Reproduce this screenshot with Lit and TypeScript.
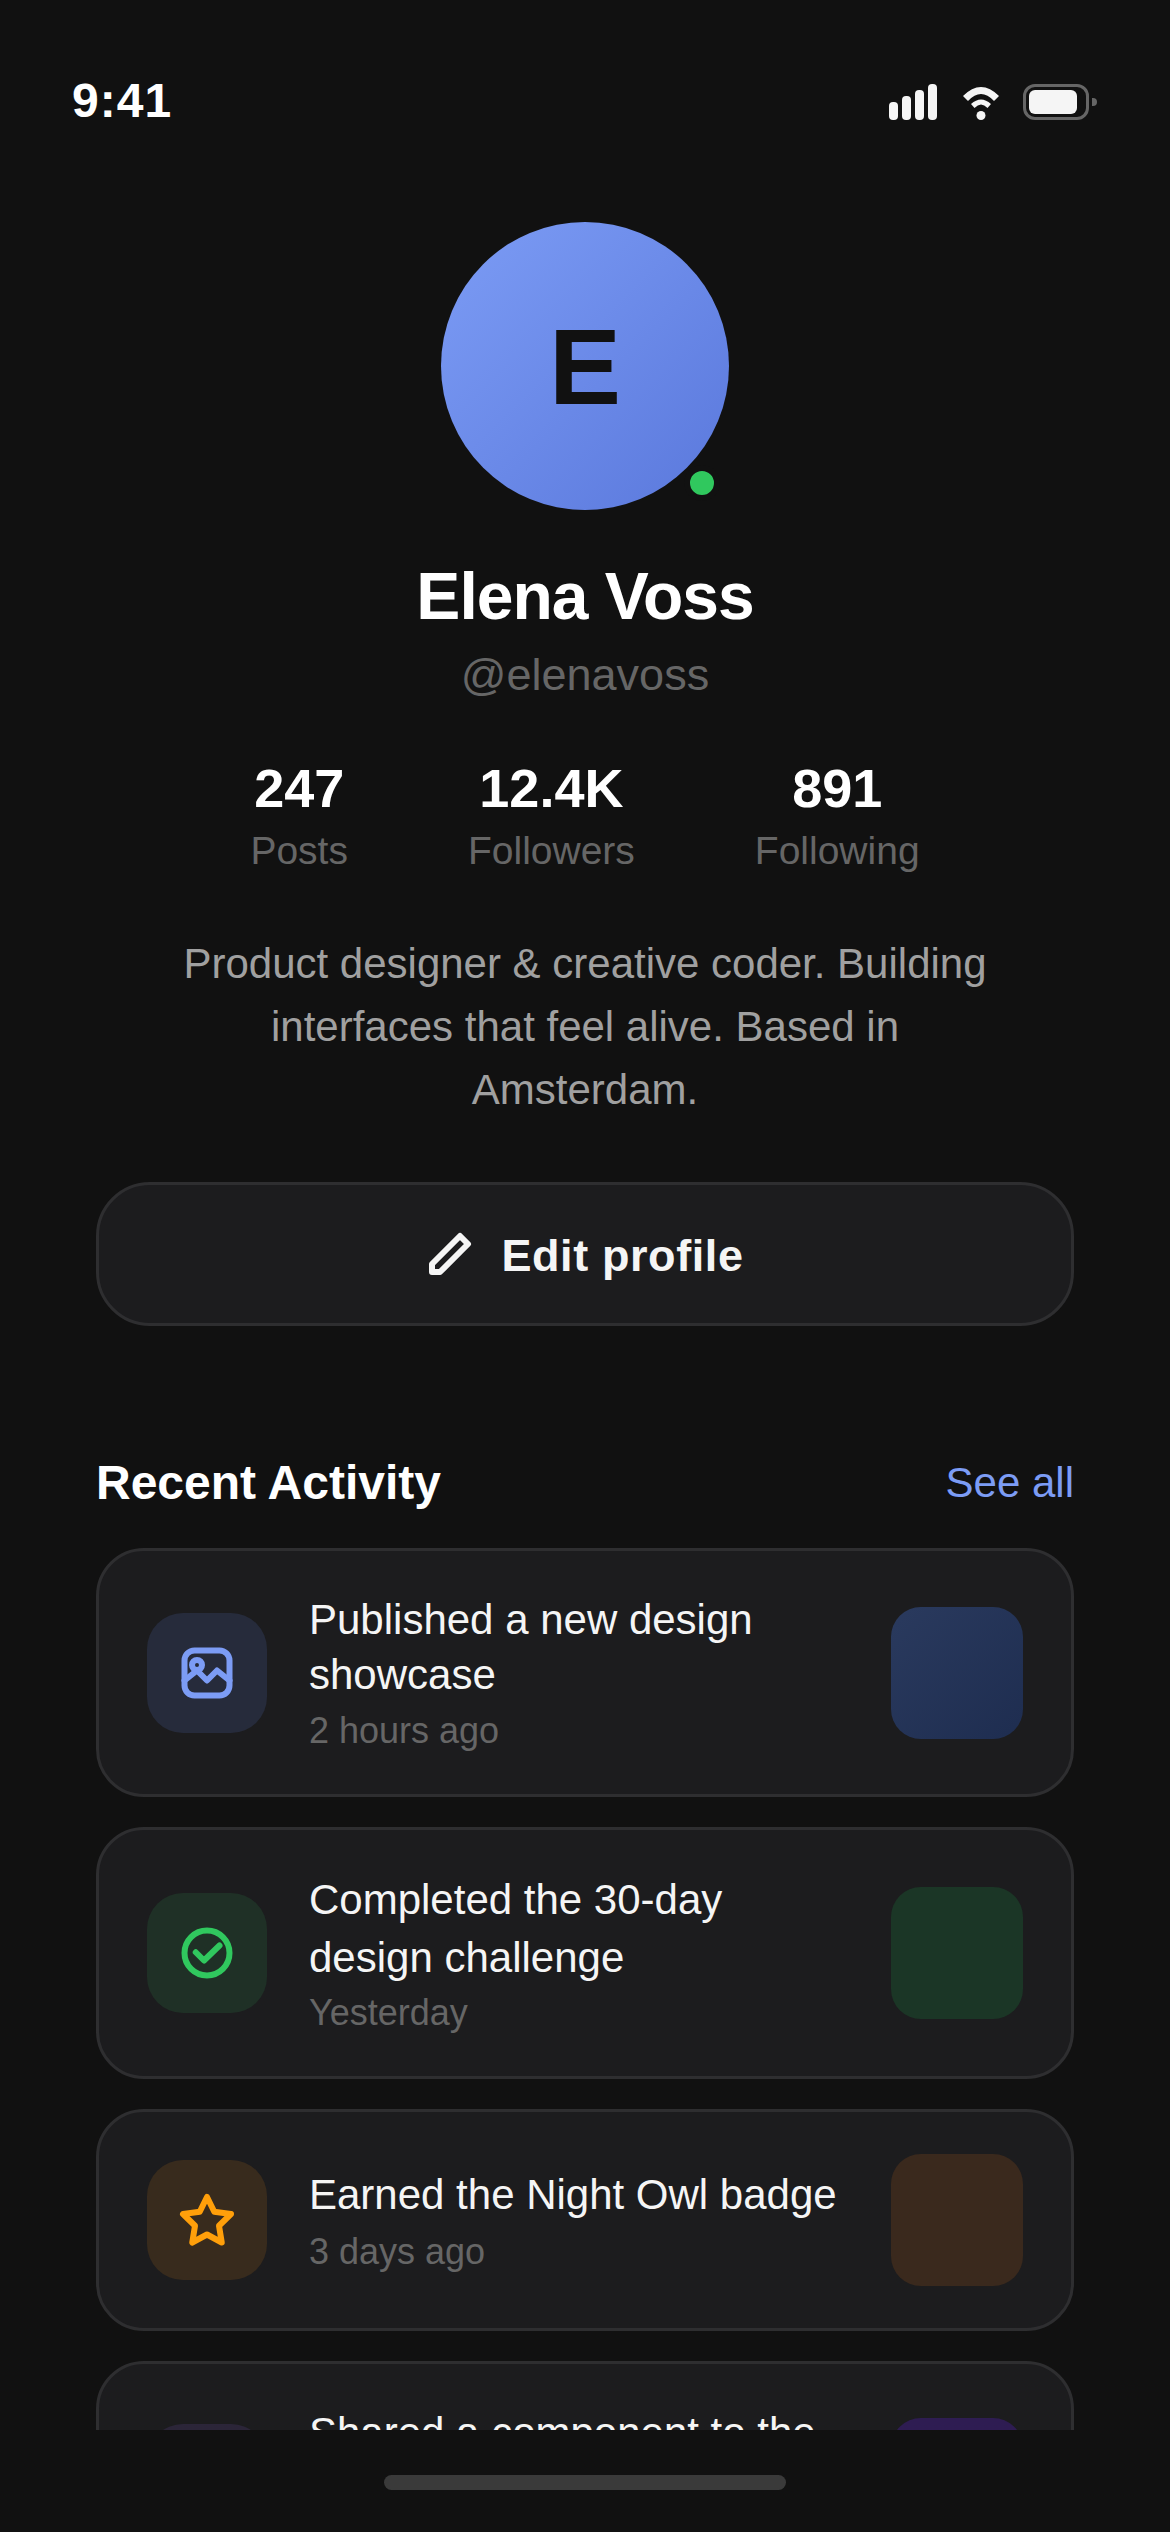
import { LitElement, html, css, svg } from "lit";
import { customElement } from "lit/decorators.js";

interface Activity {
  title: string;
  time: string;
  kind: string;
  icon: unknown;
}

const imageIcon = svg`<rect x="3" y="3" width="18" height="18" rx="4"/><circle cx="8" cy="8.800" r="2"/><polyline points="3 15 8 11 12 15 16 11 21 15"/>`;
const checkIcon = svg`<circle cx="12" cy="12" r="9"/><polyline points="7.500 11.700 10.800 15 17 9"/>`;
const starIcon = svg`<polygon points="12 2.800 14.900 8.700 21.600 9.600 16.800 14.300 17.900 21 12 17.800 6.100 21 7.200 14.300 2.400 9.600 9.100 8.700"/>`;
const shareIcon = svg`<circle cx="12" cy="12" r="9"/>`;

const ACTIVITIES: Activity[] = [
  { title: "Published a new design showcase", time: "2 hours ago", kind: "blue", icon: imageIcon },
  { title: "Completed the 30-day design challenge", time: "Yesterday", kind: "green", icon: checkIcon },
  { title: "Earned the Night Owl badge", time: "3 days ago", kind: "orange", icon: starIcon },
  { title: "Shared a component to the library", time: "5 days ago", kind: "purple", icon: shareIcon },
];

@customElement("app-root")
export class AppRoot extends LitElement {
  static styles = css`
    :host {
      display: block;
      width: 1170px;
      height: 2532px;
      background: #111111;
      color: #f5f5f5;
      font-family: "Liberation Sans", Arial, sans-serif;
    }
    .screen {
      display: flex;
      flex-direction: column;
      height: 2532px;
      overflow: hidden;
    }
    .status {
      flex: none;
      display: flex;
      justify-content: space-between;
      align-items: center;
      height: 36px;
      padding: 84px 72px 0;
    }
    .time {
      font-size: 48px;
      font-weight: 700;
      letter-spacing: 1px;
      line-height: 36px;
      margin-bottom: 2px;
      color: #fff;
    }
    .status-icons {
      display: flex;
      align-items: flex-end;
      padding-right: 9px;
    }
    .signal {
      display: flex;
      align-items: flex-end;
      gap: 4px;
      margin-right: 26px;
    }
    .signal i {
      display: block;
      width: 9px;
      background: #f5f5f5;
      border-radius: 4px;
    }
    .wifi {
      display: block;
      width: 36px;
      height: 33px;
      margin-right: 24px;
    }
    .battery {
      position: relative;
      box-sizing: border-box;
      width: 66px;
      height: 36px;
      border: 3px solid #666;
      border-radius: 12px;
      padding: 3px;
    }
    .battery::before {
      content: "";
      display: block;
      width: 48px;
      height: 24px;
      background: #f5f5f5;
      border-radius: 6px;
    }
    .battery::after {
      content: "";
      position: absolute;
      right: -11px;
      top: 11px;
      width: 5px;
      height: 8px;
      background: #666;
      border-radius: 0 4px 4px 0;
    }
    .main {
      flex: 1;
      min-height: 0;
      overflow: hidden;
      padding: 102px 96px 0;
    }
    .profile {
      display: flex;
      flex-direction: column;
      align-items: center;
    }
    .avatar {
      position: relative;
      width: 288px;
      height: 288px;
      border-radius: 50%;
      background: linear-gradient(135deg, #7c9cf5, #5a78dc);
      display: flex;
      align-items: center;
      justify-content: center;
      font-size: 108px;
      font-weight: 700;
      color: #111;
    }
    .dot {
      position: absolute;
      box-sizing: border-box;
      left: 243px;
      top: 243px;
      width: 36px;
      height: 36px;
      background: #30c85e;
      border: 6px solid #111;
      border-radius: 50%;
    }
    .name {
      margin: 48px 0 0;
      font-size: 66px;
      line-height: 76px;
      font-weight: 700;
      letter-spacing: -1px;
      color: #fff;
    }
    .handle {
      margin-top: 15px;
      font-size: 45px;
      line-height: 52px;
      color: #666;
    }
    .stats {
      display: flex;
      gap: 120px;
      margin-top: 56px;
    }
    .stat {
      display: flex;
      flex-direction: column;
      align-items: center;
    }
    .stat b {
      font-size: 54px;
      line-height: 62px;
      color: #fff;
    }
    .stat span {
      margin-top: 9px;
      font-size: 39px;
      line-height: 45px;
      color: #666;
    }
    .bio {
      margin: 59px 0 0;
      max-width: 840px;
      font-size: 42px;
      line-height: 63px;
      color: #a0a0a0;
      text-align: center;
    }
    .edit {
      box-sizing: border-box;
      display: flex;
      align-items: center;
      justify-content: center;
      gap: 27px;
      width: 100%;
      height: 144px;
      margin-top: 61px;
      background: #1c1c1e;
      border: 3px solid #2e2e30;
      border-radius: 54px;
      font-size: 45px;
      font-weight: 700;
      letter-spacing: 0.6px;
      color: #f5f5f5;
    }
    .edit span {
      margin-top: 4px;
    }
    .edit svg {
      width: 48px;
      height: 48px;
      fill: none;
      stroke: #f5f5f5;
      stroke-width: 3;
      stroke-linejoin: round;
      stroke-linecap: round;
    }
    .section-head {
      display: flex;
      justify-content: space-between;
      align-items: center;
      margin-top: 129px;
    }
    .section-head h2 {
      margin: 0;
      font-size: 48px;
      line-height: 56px;
      color: #fff;
    }
    .section-head span {
      font-size: 42px;
      color: #7c9cf5;
    }
    .list {
      display: flex;
      flex-direction: column;
      gap: 30px;
      margin-top: 37px;
    }
    .card {
      display: flex;
      align-items: center;
      gap: 42px;
      padding: 42px 48px;
      background: #1c1c1e;
      border: 3px solid #2e2e30;
      border-radius: 48px;
    }
    .tile {
      flex: none;
      display: flex;
      align-items: center;
      justify-content: center;
      width: 120px;
      height: 120px;
      border-radius: 36px;
    }
    .tile svg {
      width: 60px;
      height: 60px;
      fill: none;
      stroke: currentColor;
      stroke-width: 2.4;
      stroke-linejoin: round;
      stroke-linecap: round;
    }
    .body {
      flex: 1;
      min-width: 0;
    }
    .title {
      font-size: 42px;
      line-height: 54.6px;
      color: #f5f5f5;
    }
    .green .title {
      margin-top: -1px;
      line-height: 57.6px;
    }
    .when {
      margin-top: 7px;
      font-size: 36px;
      line-height: 43px;
      color: #666;
    }
    .green .when {
      margin-top: 5px;
    }
    .purple .when {
      margin-top: 4px;
    }
    .thumb {
      flex: none;
      width: 132px;
      height: 132px;
      border-radius: 30px;
    }
    .blue .tile { background: #262b3b; color: #7c9cf5; }
    .green .tile { background: #1f3026; color: #30c85e; }
    .orange .tile { background: #382b1d; color: #ff9f0a; }
    .purple .tile { background: #2b2538; color: #b58cf5; }
    .blue .thumb { background: linear-gradient(135deg, #2a3a5e, #1e2d50); }
    .green .thumb { background: #1b3626; }
    .orange .thumb { background: #3a291d; }
    .purple .thumb { background: #2e1c52; }
    .home-area {
      flex: none;
      display: flex;
      justify-content: center;
      height: 102px;
      padding-top: 45px;
      box-sizing: border-box;
    }
    .home {
      width: 402px;
      height: 15px;
      background: #3a3a3a;
      border-radius: 9px;
    }
  `;

  private renderCard(a: Activity) {
    return html`
      <div class="card ${a.kind}">
        <div class="tile"><svg viewBox="0 0 24 24">${a.icon}</svg></div>
        <div class="body">
          <div class="title">${a.title}</div>
          <div class="when">${a.time}</div>
        </div>
        <div class="thumb"></div>
      </div>
    `;
  }

  render() {
    return html`
      <div class="screen">
        <div class="status">
          <div class="time">9:41</div>
          <div class="status-icons">
            <div class="signal">
              <i style="height:18px"></i>
              <i style="height:24px"></i>
              <i style="height:30px"></i>
              <i style="height:36px"></i>
            </div>
            <svg class="wifi" viewBox="0 0 36 33">
              <path fill="#f5f5f5" d="M0 9Q18 -9 36 9L31 14Q18 0 5 14Z"/>
              <path fill="#f5f5f5" d="M8 17Q18 8 28 17L24.500 21Q18 14 11.500 21Z"/>
              <circle cx="18" cy="28.500" r="4.500" fill="#f5f5f5"/>
            </svg>
            <div class="battery"></div>
          </div>
        </div>
        <div class="main">
          <div class="profile">
            <div class="avatar">E<span class="dot"></span></div>
            <div class="name">Elena Voss</div>
            <div class="handle">@elenavoss</div>
            <div class="stats">
              <div class="stat"><b>247</b><span>Posts</span></div>
              <div class="stat"><b>12.4K</b><span>Followers</span></div>
              <div class="stat"><b>891</b><span>Following</span></div>
            </div>
            <p class="bio">Product designer &amp; creative coder. Building interfaces that feel alive. Based in Amsterdam.</p>
            <div class="edit">
              <svg viewBox="0 0 24 24"><path d="M17 3l4 4L7 21H3v-4L17 3z"/></svg>
              <span>Edit profile</span>
            </div>
          </div>
          <div class="section-head"><h2>Recent Activity</h2><span>See all</span></div>
          <div class="list">${ACTIVITIES.map((a) => this.renderCard(a))}</div>
        </div>
        <div class="home-area"><div class="home"></div></div>
      </div>
    `;
  }
}
